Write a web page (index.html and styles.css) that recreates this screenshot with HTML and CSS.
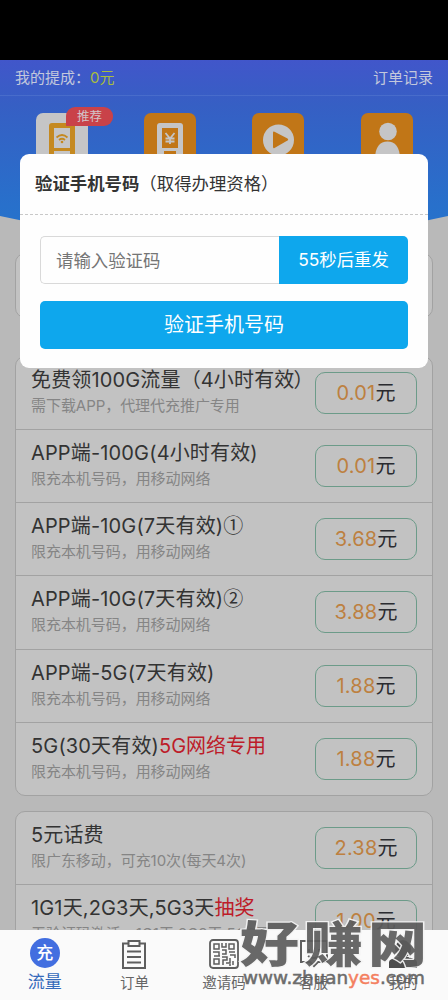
FILE: index.html
```html
<!DOCTYPE html>
<html lang="zh-CN">
<head>
<meta charset="utf-8">
<title>验证手机号码</title>
<link rel="stylesheet" href="styles.css">
</head>
<body>
<div class="phone">
  <div class="statusbar"></div>
  <header class="hero">
    <svg class="hero-bg" width="448" height="190" viewBox="0 0 448 190">
      <defs><linearGradient id="sky" x1="0" y1="0" x2="0" y2="1"><stop offset="0" stop-color="#4156ca"/><stop offset=".25" stop-color="#365fc4"/><stop offset=".8" stop-color="#2870cb"/><stop offset="1" stop-color="#2574cb"/></linearGradient></defs>
      <path d="M0 0H448V156Q224 206 0 156Z" fill="url(#sky)"/>
    </svg>
    <div class="topline"><span>我的提成：<em>0元</em></span><span>订单记录</span></div>
    <nav class="tiles">
      <div class="tile"><svg class="tile-icon" viewBox="0 0 52 52"><rect width="52" height="52" rx="7" fill="#c5c5c6"/><path d="M16 10h20a3 3 0 0 1 3 3v39H13V13a3 3 0 0 1 3-3z" fill="#c58920"/><path d="M18 15h16v20H18zM18 38h16v14H18z" fill="#c5c5c6"/><path d="M20.500 24.500q5.500-5 11 0M23 27q3-2.500 6 0" fill="none" stroke="#c58920" stroke-width="1.700"/><circle cx="26" cy="29" r="1.300" fill="#c58920"/></svg><span class="badge">推荐</span></div>
      <div class="tile"><svg class="tile-icon" viewBox="0 0 52 52"><rect width="52" height="52" rx="7" fill="#c17617"/><path d="M16 10h20a3 3 0 0 1 3 3v39H13V13a3 3 0 0 1 3-3z" fill="#c5c5c6"/><path d="M18 15h16v20H18zM20 38h12v14H20z" fill="#c17617"/><path d="M21.500 20l4.500 5.500 4.500-5.500M26 25.500V31M21.500 25.500h9M21.500 28.500h9" fill="none" stroke="#c5c5c6" stroke-width="1.800"/></svg></div>
      <div class="tile"><svg class="tile-icon" viewBox="0 0 52 52"><rect width="52" height="52" rx="7" fill="#c17617"/><circle cx="26.500" cy="27" r="15.500" fill="#c5c5c6"/><path d="M21 19.500q0-1.500 1.500-.8l13 6.800q1.500 1 0 2l-13 7.500q-1.500.7-1.500-.9z" fill="#c17617"/></svg></div>
      <div class="tile"><svg class="tile-icon" viewBox="0 0 52 52"><rect width="52" height="52" rx="7" fill="#c17617"/><circle cx="27" cy="18.500" r="8.800" fill="#c5c5c6"/><path d="M14 46C14 34 19 28.500 26.500 28.500S39 34 39 46z" fill="#c5c5c6"/></svg></div>
    </nav>
  </header>

  <main class="content">
    <section class="card phone-card"></section>
    <section class="card">
      <div class="row"><div class="info"><h3>免费领100G流量（4小时有效<span class="close">）</span></h3><p>需下载APP，代理代充推广专用</p></div><div class="price"><b>0.01</b>元</div></div>
      <div class="row"><div class="info"><h3>APP端-100G(4小时有效)</h3><p>限充本机号码，用移动网络</p></div><div class="price"><b>0.01</b>元</div></div>
      <div class="row"><div class="info"><h3>APP端-10G(7天有效)<span class="circled">①</span></h3><p>限充本机号码，用移动网络</p></div><div class="price"><b>3.68</b>元</div></div>
      <div class="row"><div class="info"><h3>APP端-10G(7天有效)<span class="circled">②</span></h3><p>限充本机号码，用移动网络</p></div><div class="price"><b>3.88</b>元</div></div>
      <div class="row"><div class="info"><h3>APP端-5G(7天有效)</h3><p>限充本机号码，用移动网络</p></div><div class="price"><b>1.88</b>元</div></div>
      <div class="row"><div class="info"><h3>5G(30天有效)<strong>5G网络专用</strong></h3><p>限充本机号码，用移动网络</p></div><div class="price"><b>1.88</b>元</div></div>
    </section>
    <section class="card">
      <div class="row"><div class="info"><h3>5元话费</h3><p>限广东移动，可充10次(每天4次)</p></div><div class="price"><b>2.38</b>元</div></div>
      <div class="row"><div class="info"><h3>1G1天,2G3天,5G3天<strong>抽奖</strong></h3><p>无验证码激活，1G1天,2G3天,5G3天</p></div><div class="price"><b>1.00</b>元</div></div>
    </section>
  </main>

  <nav class="tabbar">
    <div class="tab active"><span class="coin">充</span><span class="tab-label">流量</span></div>
    <div class="tab"><svg class="tab-icon" viewBox="0 0 30 30"><path d="M9 4.500H4V29h22V4.500h-5M9.500 2h11v5h-11zM8 12.500h14M8 18h14M8 23.500h14" fill="none" stroke="#5e5e5e" stroke-width="2"/></svg><span class="tab-label">订单</span></div>
    <div class="tab"><svg class="tab-icon" viewBox="0 0 30 30" fill="none" stroke="#5e5e5e" stroke-width="1.500"><rect x="1" y="1" width="28" height="28" rx="3" stroke-width="1.800"/><path d="M5 5h5v5H5zM20 5h5v5h-5zM5 20h5v5H5zM13 4v4h4V4M13 11h4v4h-4M4 13h6v4H5M20 13h6M21 16h5v3M13 18h5v3h-4v5M17 24h4v-5M24 22v4M20 26h2M8 17h3"/></svg><span class="tab-label">邀请码</span></div>
    <div class="tab"><svg class="tab-icon" viewBox="0 0 30 30" fill="none" stroke="#5e5e5e" stroke-width="2"><path d="M2 2h26v21h-9l-4 4-4-4H2zM10 10v3M20 10v3M9 17q6 4 12 0"/></svg><span class="tab-label">客服</span></div>
    <div class="tab"><svg class="tab-icon" viewBox="0 0 30 30" fill="#4c4c4c"><ellipse cx="15" cy="10" rx="8" ry="9"/><path d="M1 29v-6q0-2 3-3l6-2h10l6 2q3 1 3 3v6z"/></svg><span class="tab-label">我的</span></div>
  </nav>

  <div class="modal">
    <div class="modal-head"><strong>验证手机号码</strong><span>（取得办理资格）</span></div>
    <div class="modal-body">
      <div class="code"><div class="code-input">请输入验证码</div><div class="resend">55秒后重发</div></div>
      <div class="submit">验证手机号码</div>
    </div>
  </div>

  <svg class="watermark" width="200" height="80" viewBox="0 0 200 80">
    <g transform="translate(6 48) scale(1 .82)"><text class="wm-name" x="0" y="0" textLength="187">好赚网</text></g>
    <text class="wm-url" x="9" y="70" textLength="182" lengthAdjust="spacingAndGlyphs">www.zhuan<tspan fill="#f47552" stroke="#f47552">yes</tspan>.com</text>
  </svg>
</div>
</body>
</html>
```
FILE: styles.css
```css
* { box-sizing: border-box; }
body { margin: 0; }
.phone { position: relative; width: 448px; height: 1000px; overflow: hidden; background: #b9b9b9; color: #333; font-family: Inter, "Noto Sans CJK SC", sans-serif; }
.statusbar { height: 60px; background: #000; }
.hero { position: relative; height: 190px; }
.hero-bg { position: absolute; inset: 0; }
.topline { position: relative; display: flex; justify-content: space-between; height: 36px; padding: 0 15px; border-bottom: 1px solid #486ccb; color: #c3c8dc; font-size: 15px; line-height: 35px; }
.topline em { color: #a9bd3e; font-style: normal; }
.tiles { position: relative; display: grid; grid-template-columns: repeat(4, 108.2px); padding: 17px 8px 0; }
.tile { position: relative; display: flex; justify-content: center; }
.tile-icon { width: 52px; height: 52px; }
.badge { position: absolute; left: 58px; top: -6px; width: 47px; height: 19px; border-radius: 9px 9px 9px 0; background: #c94249; color: #d3c3c7; font-size: 12.500px; line-height: 19px; text-align: center; }
.content { display: flex; flex-direction: column; padding: 0 15px; margin-top: 3px; }
.card { border: 1px solid #a2a2a2; border-radius: 10px; background: #c2c2c2; margin-bottom: 15px; }
.phone-card { height: 65px; margin-bottom: 38px; }
.row { display: flex; justify-content: space-between; height: 73.170px; padding: 0 15px; border-bottom: 1px solid #a2a2a2; }
.row:last-child { border-bottom: 0; height: 72.170px; }
.info { padding-top: 9px; white-space: nowrap; }
.info h3 { height: 29px; margin: 0; font-size: 20px; line-height: 29px; font-weight: 400; letter-spacing: .15px; }
.info h3 strong { font-weight: 400; color: #bd1c29; letter-spacing: 0; }
.circled { font-family: "Noto Sans CJK SC", sans-serif; line-height: 1; }
.close { display: inline-block; margin-left: -1px; }
.info p { margin: 0; font-size: 15px; line-height: 22px; color: #858585; letter-spacing: -.05px; }
.price { width: 102px; height: 42px; margin-top: 15px; border: 1px solid #6c9b89; border-radius: 10px; font-size: 20px; line-height: 41px; text-align: center; color: #2a2b30; }
.price b { color: #bd8040; font-weight: 400; letter-spacing: .2px; }
.tabbar { position: absolute; left: 0; right: 0; bottom: 0; height: 70px; display: grid; grid-template-columns: repeat(5, 1fr); background: #fafafa; color: #666; }
.tab { display: flex; flex-direction: column; align-items: center; padding-top: 8px; font-size: 14.500px; }
.tab-icon { width: 30px; height: 30px; margin-top: 1px; }
.tab-label { line-height: 20px; margin-top: 4px; }
.active { color: #356abb; font-size: 17px; }
.active .tab-label { margin-top: 4px; }
.coin { width: 30px; height: 30px; border-radius: 50%; background: #426ee0; color: #fff; font-size: 17px; font-weight: 500; line-height: 30px; text-align: center; }
.modal { position: absolute; left: 20px; top: 154px; width: 408px; height: 214px; border-radius: 9px; background: #fefefe; }
.modal-head { display: flex; height: 61px; padding-left: 15px; border-bottom: 1px dashed #c8c8c8; font-size: 17.400px; line-height: 60px; }
.modal-body { padding: 21px 20px; display: flex; flex-direction: column; gap: 17px; }
.code { display: flex; height: 48px; }
.code-input { flex: 1; padding-left: 15px; border: 1px solid #d9d9d9; border-right: 0; border-radius: 5px 0 0 5px; color: #757575; font-size: 17.400px; line-height: 47px; }
.resend { width: 129px; border-radius: 0 5px 5px 0; background: #0ea7ed; color: #fff; font-size: 17.400px; line-height: 48px; text-align: center; }
.submit { height: 48px; border-radius: 5px; background: #0ea7ed; color: #fff; font-size: 20px; line-height: 49px; text-align: center; }
.watermark { position: absolute; left: 234px; top: 914px; opacity: .92; }
.wm-name { font: 900 59px "Noto Sans CJK SC", sans-serif; fill: #5c5c5c; stroke: #f4f4f4; stroke-width: 3px; paint-order: stroke; }
.wm-url { font: 500 18px "DejaVu Sans", sans-serif; fill: #606060; stroke: #606060; stroke-width: .5px; }
```
